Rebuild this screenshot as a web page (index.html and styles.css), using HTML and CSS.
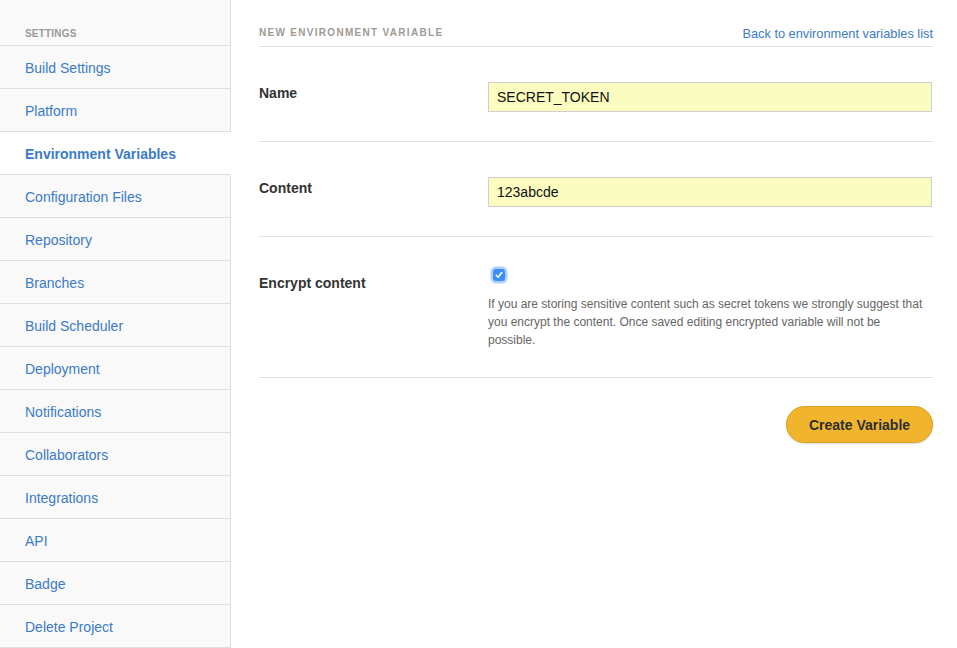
FILE: index.html
```html
<!DOCTYPE html>
<html>
<head>
<meta charset="utf-8">
<link rel="stylesheet" href="styles.css">
</head>
<body>
<div class="layout">
  <aside class="sidebar">
    <div class="side-head">SETTINGS</div>
    <a class="side-item" href="#">Build Settings</a>
    <a class="side-item" href="#">Platform</a>
    <a class="side-item active" href="#">Environment Variables</a>
    <a class="side-item" href="#">Configuration Files</a>
    <a class="side-item" href="#">Repository</a>
    <a class="side-item" href="#">Branches</a>
    <a class="side-item" href="#">Build Scheduler</a>
    <a class="side-item" href="#">Deployment</a>
    <a class="side-item" href="#">Notifications</a>
    <a class="side-item" href="#">Collaborators</a>
    <a class="side-item" href="#">Integrations</a>
    <a class="side-item" href="#">API</a>
    <a class="side-item" href="#">Badge</a>
    <a class="side-item" href="#">Delete Project</a>
  </aside>
  <main class="main">
    <div class="main-head">
      <h2 class="title">NEW ENVIRONMENT VARIABLE</h2>
      <a class="back" href="#">Back to environment variables list</a>
    </div>
    <div class="row">
      <label class="label">Name</label>
      <div class="field"><div class="input">SECRET_TOKEN</div></div>
    </div>
    <div class="row">
      <label class="label">Content</label>
      <div class="field"><div class="input">123abcde</div></div>
    </div>
    <div class="row row-check">
      <label class="label">Encrypt content</label>
      <div class="field">
        <span class="checkbox"><svg width="8" height="8" viewBox="0 0 8 8"><path d="M1.2 4.3 L3.1 6.2 L6.8 1.6" fill="none" stroke="#fff" stroke-width="1.6" stroke-linecap="round" stroke-linejoin="round"/></svg></span>
        <p class="help">If you are storing sensitive content such as secret tokens we strongly suggest that you encrypt the content. Once saved editing encrypted variable will not be possible.</p>
      </div>
    </div>
    <div class="actions">
      <button class="btn">Create Variable</button>
    </div>
  </main>
</div>
</body>
</html>
```
FILE: styles.css
```css
html, body {
  margin: 0;
  padding: 0;
  background: #fff;
  font-family: "Helvetica Neue", "Liberation Sans", Arial, sans-serif;
}
.layout {
  display: flex;
  height: 648px;
  overflow: hidden;
}
.sidebar {
  width: 231px;
  flex: none;
  display: flex;
  flex-direction: column;
  background: #f9f9f9;
}
.side-head {
  height: 47px;
  box-sizing: border-box;
  padding: 29px 0 0 25px;
  font-size: 10px;
  font-weight: bold;
  color: #9a9a9a;
  letter-spacing: 0.2px;
  border-bottom: 1px solid #dedede;
  border-right: 1px solid #dedede;
  line-height: 10px;
}
.side-item {
  display: flex;
  align-items: center;
  height: 43px;
  box-sizing: border-box;
  padding: 1px 0 0 25px;
  font-size: 14px;
  color: #3b7bc9;
  text-decoration: none;
  border-bottom: 1px solid #dedede;
  border-right: 1px solid #dedede;
  flex: none;
}
.side-item.active {
  background: #fff;
  border-right-color: #fff;
  font-weight: bold;
}
.main {
  flex: 1;
  padding: 0 24px 0 28px;
}
.main-head {
  height: 47px;
  box-sizing: border-box;
  border-bottom: 1px solid #e2e2e2;
  display: flex;
  justify-content: space-between;
  align-items: flex-start;
  padding-top: 27px;
}
.title {
  margin: 0;
  font-size: 10px;
  line-height: 11px;
  font-weight: bold;
  color: #9e9a94;
  letter-spacing: 1.3px;
}
.back {
  font-size: 12.8px;
  line-height: 14px;
  color: #3b7bc9;
  text-decoration: none;
}
.row {
  display: grid;
  grid-template-columns: 229px 1fr;
  padding: 35px 0 29px;
  border-bottom: 1px solid #e2e2e2;
}
.label {
  font-size: 14px;
  font-weight: bold;
  color: #333;
  line-height: 20px;
  margin-top: 1px;
}
.input {
  height: 30px;
  box-sizing: border-box;
  border: 1px solid #cfcfcf;
  background: #fafcc0;
  padding: 0 8px;
  margin-right: 1px;
  font-size: 14px;
  line-height: 28px;
  color: #111;
}
.row-check {
  padding: 35px 0 28px;
}
.checkbox {
  display: flex;
  align-items: center;
  justify-content: center;
  width: 12px;
  height: 12px;
  margin: -3px 0 0 5px;
  border-radius: 3px;
  background: #3a8ef5;
  box-shadow: 0 0 0 2.5px rgba(110, 170, 250, 0.55);
}
.help {
  margin: 14px 0 0;
  font-size: 12px;
  line-height: 18px;
  color: #666;
  max-width: 438px;
}
.actions {
  display: flex;
  justify-content: flex-end;
  padding-top: 28px;
}
.btn {
  width: 147px;
  height: 37px;
  border-radius: 19px;
  border: 1px solid #d9a21f;
  background: #f0b52c;
  font-family: "Helvetica Neue", "Liberation Sans", Arial, sans-serif;
  font-size: 14px;
  font-weight: bold;
  color: #2d2d2d;
  box-shadow: 0 1px 2px rgba(0, 0, 0, 0.15);
  padding: 0;
}
```
